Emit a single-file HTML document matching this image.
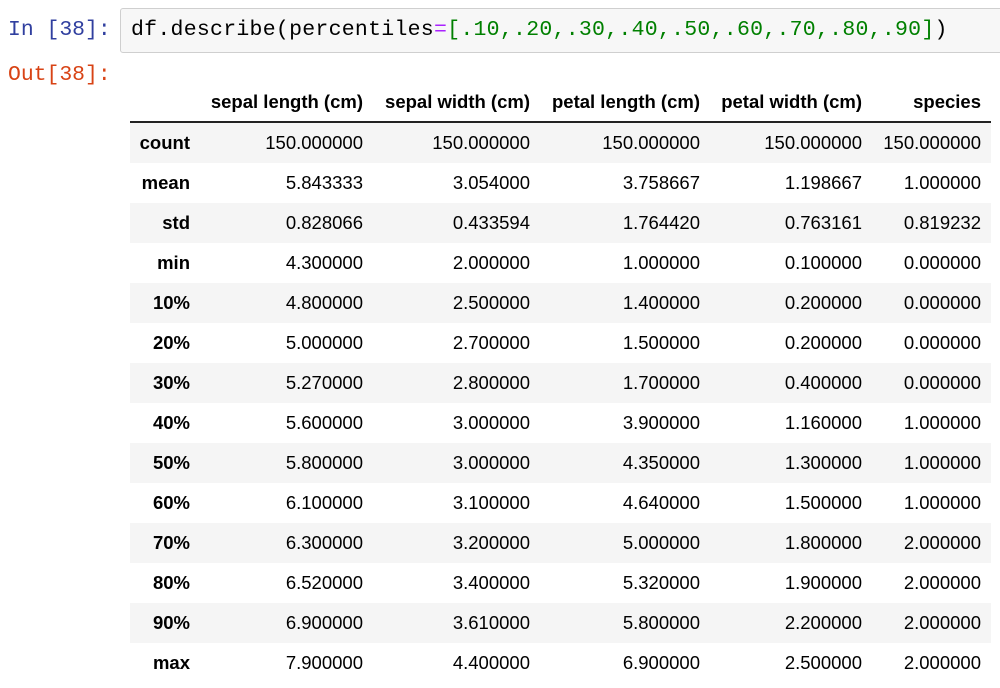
<!DOCTYPE html>
<html><head><meta charset="utf-8"><style>
html,body{margin:0;padding:0;background:#fff;width:1000px;height:688px;overflow:hidden}
.mono{font-family:"Liberation Mono",monospace;font-size:21.4px;position:absolute;white-space:pre}
.inbox{position:absolute;left:120px;top:8px;width:900px;height:43px;background:#f7f7f7;border:1px solid #cfcfcf;border-radius:3px}
table{position:absolute;left:130px;top:82px;border-collapse:collapse;font-family:"Liberation Sans",Arial,sans-serif;font-size:18.5px;color:#000}
td,th{height:40px;padding:0 10px 0 0;text-align:right;white-space:nowrap}
thead th{height:39px;border-bottom:2px solid #222;vertical-align:middle;padding-bottom:0}
tbody tr:nth-child(odd){background:#f5f5f5}
th{font-weight:bold}
</style></head><body>
<div class="mono" style="left:8px;top:18px;color:#303f9f">In [38]:</div>
<div class="inbox"></div>
<div class="mono" style="left:131px;top:18px;color:#000;font-size:21.5px;letter-spacing:0.27px">df.describe(percentiles<span style="color:#aa22ff">=</span><span style="color:#008000">[.10,.20,.30,.40,.50,.60,.70,.80,.90]</span>)</div>
<div class="mono" style="left:8px;top:63px;color:#d84315">Out[38]:</div>
<table>
<colgroup><col style="width:70px"><col style="width:173px"><col style="width:167px"><col style="width:170px"><col style="width:162px"><col style="width:119px"></colgroup>
<thead><tr><th></th><th>sepal length (cm)</th><th>sepal width (cm)</th><th>petal length (cm)</th><th>petal width (cm)</th><th>species</th></tr></thead>
<tbody>
<tr><th>count</th><td>150.000000</td><td>150.000000</td><td>150.000000</td><td>150.000000</td><td>150.000000</td></tr>
<tr><th>mean</th><td>5.843333</td><td>3.054000</td><td>3.758667</td><td>1.198667</td><td>1.000000</td></tr>
<tr><th>std</th><td>0.828066</td><td>0.433594</td><td>1.764420</td><td>0.763161</td><td>0.819232</td></tr>
<tr><th>min</th><td>4.300000</td><td>2.000000</td><td>1.000000</td><td>0.100000</td><td>0.000000</td></tr>
<tr><th>10%</th><td>4.800000</td><td>2.500000</td><td>1.400000</td><td>0.200000</td><td>0.000000</td></tr>
<tr><th>20%</th><td>5.000000</td><td>2.700000</td><td>1.500000</td><td>0.200000</td><td>0.000000</td></tr>
<tr><th>30%</th><td>5.270000</td><td>2.800000</td><td>1.700000</td><td>0.400000</td><td>0.000000</td></tr>
<tr><th>40%</th><td>5.600000</td><td>3.000000</td><td>3.900000</td><td>1.160000</td><td>1.000000</td></tr>
<tr><th>50%</th><td>5.800000</td><td>3.000000</td><td>4.350000</td><td>1.300000</td><td>1.000000</td></tr>
<tr><th>60%</th><td>6.100000</td><td>3.100000</td><td>4.640000</td><td>1.500000</td><td>1.000000</td></tr>
<tr><th>70%</th><td>6.300000</td><td>3.200000</td><td>5.000000</td><td>1.800000</td><td>2.000000</td></tr>
<tr><th>80%</th><td>6.520000</td><td>3.400000</td><td>5.320000</td><td>1.900000</td><td>2.000000</td></tr>
<tr><th>90%</th><td>6.900000</td><td>3.610000</td><td>5.800000</td><td>2.200000</td><td>2.000000</td></tr>
<tr><th>max</th><td>7.900000</td><td>4.400000</td><td>6.900000</td><td>2.500000</td><td>2.000000</td></tr>
</tbody></table>
</body></html>
